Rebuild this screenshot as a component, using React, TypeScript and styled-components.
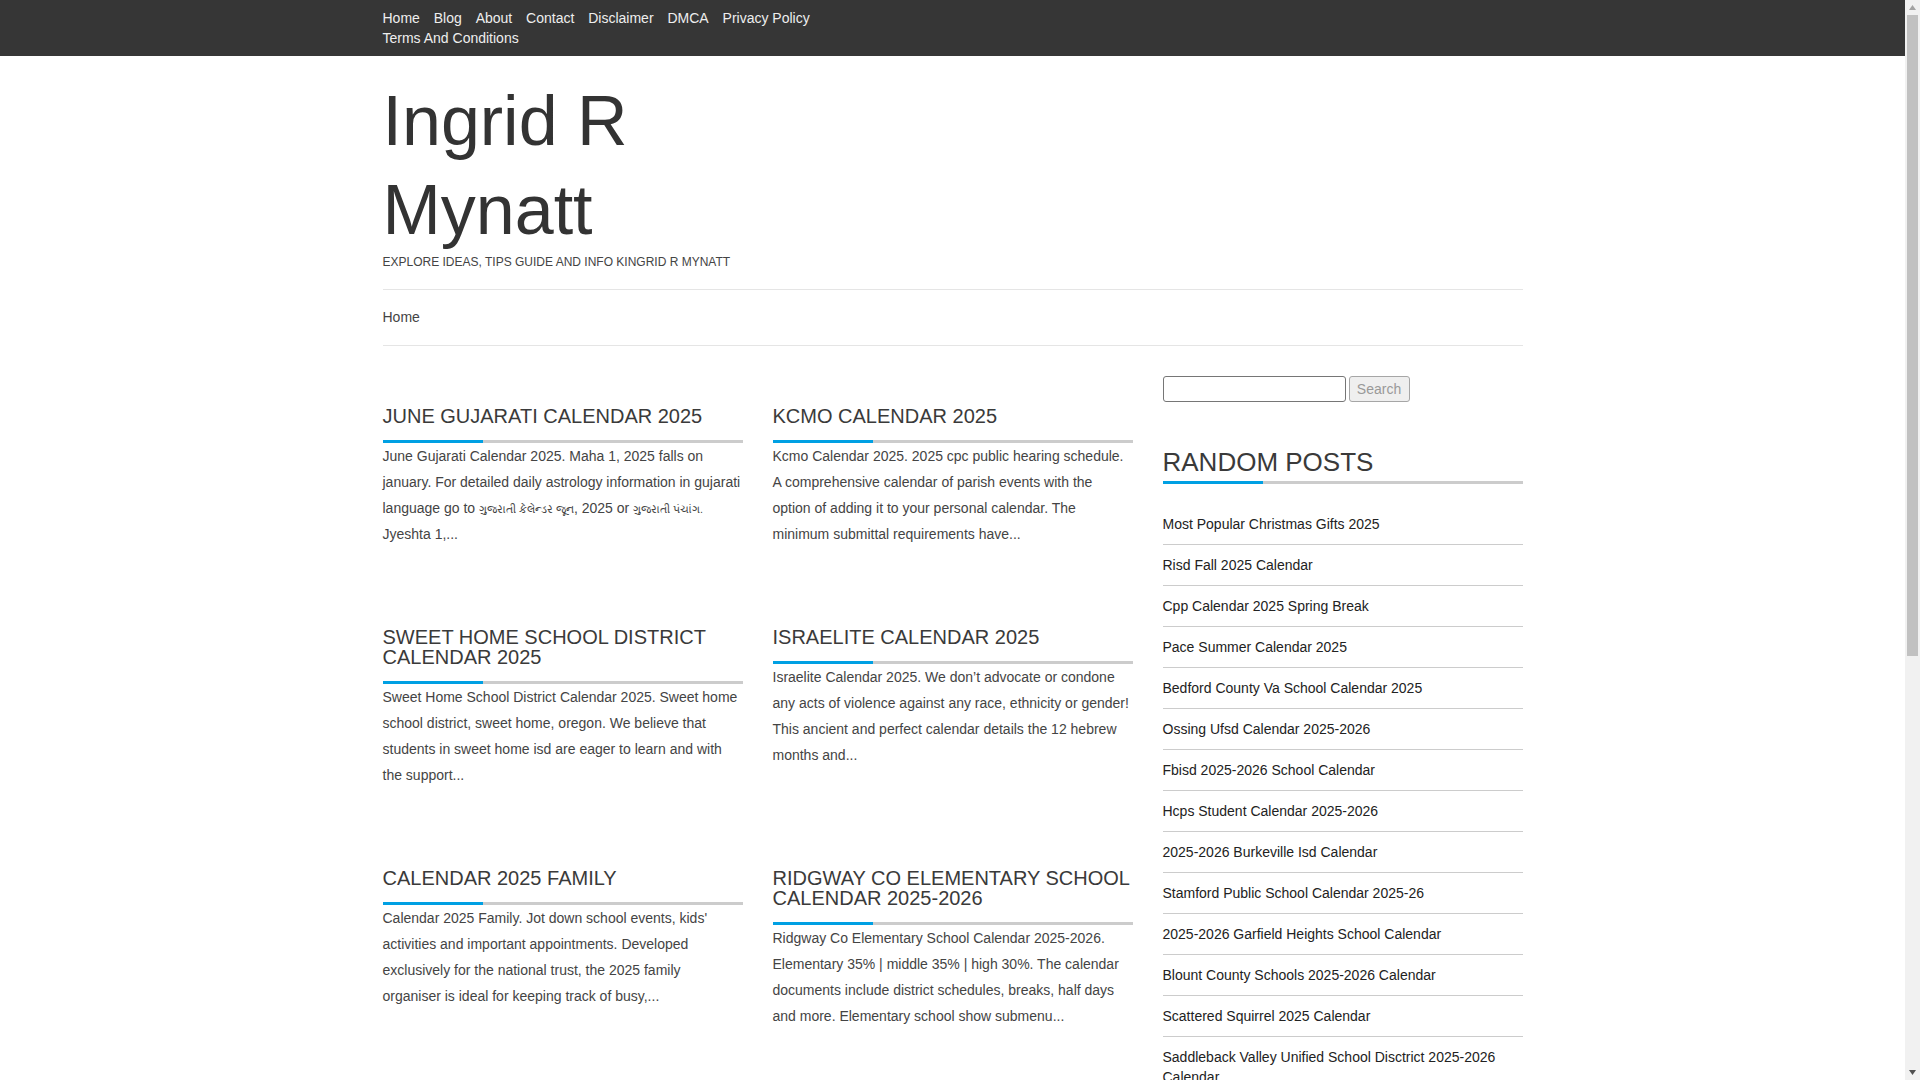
import React from 'react';
import styled, { createGlobalStyle } from 'styled-components';

const Global = createGlobalStyle`
  html, body { margin: 0; padding: 0; background: #fff; }
  body { font-family: "Liberation Sans", Arial, sans-serif; font-size: 14px; line-height: 20px; color: #444; }
  * { box-sizing: border-box; }
`;

const Page = styled.div`
  width: 1905px;
  min-height: 1769px;
`;
const ScrollTrack = styled.div`
  position: fixed;
  top: 0;
  right: 0;
  width: 15px;
  height: 100vh;
  background: #f1f1f1;
`;
const ScrollThumb = styled.div`
  position: absolute;
  top: 15px;
  left: 2px;
  width: 11px;
  height: 641px;
  background: #c1c1c1;
`;
const ScrollArrow = styled.svg<{ $end: 'top' | 'bottom' }>`
  position: absolute;
  left: 4px;
  ${(p) => (p.$end === 'top' ? 'top: 5px;' : 'bottom: 5px;')}
  width: 7px;
  height: 5px;
`;
const TopBar = styled.div`
  height: 56px;
  background: #363636;
  padding-top: 8px;
`;
const Container = styled.div`
  width: 1140px;
  margin: 0 auto;
`;
const TopNav = styled.nav`
  width: 457.5px;
  display: flex;
  flex-wrap: wrap;
  column-gap: 13.89px;
`;
const TopLink = styled.a`
  color: #eee;
  font-size: 14px;
  line-height: 20px;
`;
const Header = styled.header`
  padding-top: 21px;
`;
const SiteTitle = styled.h1`
  width: 457.5px;
  margin: 0;
  font-size: 70px;
  font-weight: 400;
  line-height: 89px;
  color: #333;
`;
const Tagline = styled.p`
  margin: 0;
  padding-bottom: 19px;
  font-size: 12px;
  line-height: 15px;
  text-transform: uppercase;
  color: #444;
`;
const PageNav = styled.nav`
  height: 57px;
  padding-top: 17px;
  border-top: 1px solid #e5e5e5;
  border-bottom: 1px solid #e5e5e5;
`;
const PageLink = styled.a`
  color: #444;
  font-size: 14px;
  line-height: 20px;
`;
const Main = styled.main`
  display: grid;
  grid-template-columns: 750px 360px;
  column-gap: 30px;
  padding-top: 30px;
`;
const PostGrid = styled.div`
  display: grid;
  grid-template-columns: 360px 360px;
  column-gap: 30px;
  row-gap: 80px;
  align-content: start;
  padding-top: 30px;
`;
const Post = styled.article``;
const Heading = styled.h2`
  position: relative;
  margin: 0;
  padding-bottom: 14px;
  border-bottom: 3px solid #ccc;
  font-size: 20px;
  font-weight: 400;
  line-height: 20px;
  text-transform: uppercase;
  color: #3a3a3a;
  &::after {
    content: '';
    position: absolute;
    left: 0;
    bottom: -3px;
    width: 100px;
    height: 3px;
    background: #00a0e3;
  }
`;
const Excerpt = styled.p`
  margin: 0;
  font-size: 14px;
  line-height: 26px;
  color: #444;
`;
const Gujarati = styled.span`
  font-size: 10.6px;
  line-height: 0;
`;
const SearchForm = styled.form`
  display: flex;
  gap: 3px;
`;
const SearchInput = styled.input`
  width: 183px;
  height: 26px;
  padding: 1px 2px;
  border: 1px solid #767676;
  border-radius: 3px;
  background: #fff;
`;
const SearchButton = styled.button`
  width: 61px;
  height: 26px;
  padding: 0;
  border: 1px solid #a6a6a6;
  border-radius: 3px;
  background: #efefef;
  color: #999;
  font-family: "Liberation Sans", Arial, sans-serif;
  font-size: 14px;
`;
const WidgetTitle = styled.h3`
  position: relative;
  margin: 47px 0 20px;
  padding-bottom: 6px;
  border-bottom: 3px solid #ccc;
  font-size: 26px;
  font-weight: 400;
  line-height: 26px;
  text-transform: uppercase;
  color: #3a3a3a;
  &::after {
    content: '';
    position: absolute;
    left: 0;
    bottom: -3px;
    width: 100px;
    height: 3px;
    background: #00a0e3;
  }
`;
const PostList = styled.ul`
  margin: 0;
  padding: 0;
  list-style: none;
`;
const PostItem = styled.li`
  padding: 10px 0;
  border-bottom: 1px solid #ccc;
  font-size: 14px;
  line-height: 20px;
  color: #222;
`;

const topLinks = ['Home', 'Blog', 'About', 'Contact', 'Disclaimer', 'DMCA', 'Privacy Policy', 'Terms And Conditions'];
const posts: [string, React.ReactNode][] = [
  ['June Gujarati Calendar 2025', <>June Gujarati Calendar 2025. Maha 1, 2025 falls on january. For detailed daily astrology information in gujarati language go to <Gujarati>ગુજરાતી કેલેન્ડર જૂન</Gujarati>, 2025 or <Gujarati>ગુજરાતી પંચાંગ.</Gujarati> Jyeshta 1,...</>],
  ['Kcmo Calendar 2025', 'Kcmo Calendar 2025. 2025 cpc public hearing schedule. A comprehensive calendar of parish events with the option of adding it to your personal calendar. The minimum submittal requirements have...'],
  ['Sweet Home School District Calendar 2025', 'Sweet Home School District Calendar 2025. Sweet home school district, sweet home, oregon. We believe that students in sweet home isd are eager to learn and with the support...'],
  ['Israelite Calendar 2025', 'Israelite Calendar 2025. We don’t advocate or condone any acts of violence against any race, ethnicity or gender! This ancient and perfect calendar details the 12 hebrew months and...'],
  ['Calendar 2025 Family', "Calendar 2025 Family. Jot down school events, kids' activities and important appointments. Developed exclusively for the national trust, the 2025 family organiser is ideal for keeping track of busy,..."],
  ['Ridgway Co Elementary School Calendar 2025-2026', 'Ridgway Co Elementary School Calendar 2025-2026. Elementary 35% | middle 35% | high 30%. The calendar documents include district schedules, breaks, half days and more. Elementary school show submenu...'],
];
const randomPosts = [
  'Most Popular Christmas Gifts 2025',
  'Risd Fall 2025 Calendar',
  'Cpp Calendar 2025 Spring Break',
  'Pace Summer Calendar 2025',
  'Bedford County Va School Calendar 2025',
  'Ossing Ufsd Calendar 2025-2026',
  'Fbisd 2025-2026 School Calendar',
  'Hcps Student Calendar 2025-2026',
  '2025-2026 Burkeville Isd Calendar',
  'Stamford Public School Calendar 2025-26',
  '2025-2026 Garfield Heights School Calendar',
  'Blount County Schools 2025-2026 Calendar',
  'Scattered Squirrel 2025 Calendar',
  'Saddleback Valley Unified School Disctrict 2025-2026 Calendar',
];

export default function App() {
  return (
    <Page>
      <Global />
      <TopBar>
        <Container>
          <TopNav>
            {topLinks.map((l) => (
              <TopLink key={l}>{l}</TopLink>
            ))}
          </TopNav>
        </Container>
      </TopBar>
      <Container>
        <Header>
          <SiteTitle>Ingrid R Mynatt</SiteTitle>
          <Tagline>Explore Ideas, Tips Guide and Info Kingrid R Mynatt</Tagline>
        </Header>
        <PageNav>
          <PageLink>Home</PageLink>
        </PageNav>
        <Main>
          <PostGrid>
            {posts.map(([t, e]) => (
              <Post key={t}>
                <Heading>{t}</Heading>
                <Excerpt>{e}</Excerpt>
              </Post>
            ))}
          </PostGrid>
          <aside>
            <SearchForm>
              <SearchInput type="text" />
              <SearchButton type="button">Search</SearchButton>
            </SearchForm>
            <WidgetTitle>Random Posts</WidgetTitle>
            <PostList>
              {randomPosts.map((p) => (
                <PostItem key={p}>{p}</PostItem>
              ))}
            </PostList>
          </aside>
        </Main>
      </Container>
      <ScrollTrack>
        <ScrollArrow $end="top" viewBox="0 0 7 5">
          <path d="M3.5 0 L7 5 L0 5 Z" fill="#a3a3a3" />
        </ScrollArrow>
        <ScrollThumb />
        <ScrollArrow $end="bottom" viewBox="0 0 7 5">
          <path d="M0 0 L7 0 L3.5 5 Z" fill="#505050" />
        </ScrollArrow>
      </ScrollTrack>
    </Page>
  );
}
